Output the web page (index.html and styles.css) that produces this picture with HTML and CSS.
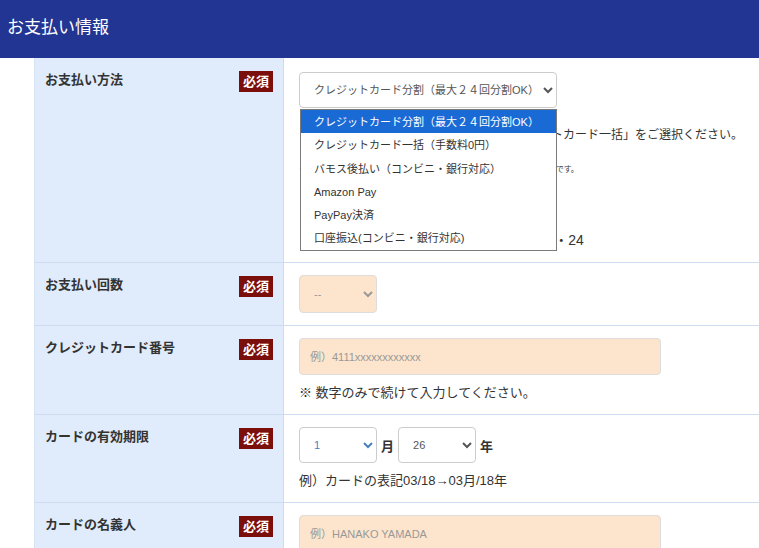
FILE: index.html
```html
<!DOCTYPE html>
<html lang="ja">
<head>
<meta charset="utf-8">
<title>お支払い情報</title>
<link rel="stylesheet" href="styles.css">
</head>
<body>
<header class="page-head"><h1 class="page-title">お支払い情報</h1></header>
<div class="form">
  <div class="row">
    <div class="label"><span class="label-text">お支払い方法</span><span class="req">必須</span></div>
    <div class="field">
      <div class="select-wrap">
        <select class="sel sel-method"><option>クレジットカード分割（最大２４回分割OK）</option></select>
        <ul class="popup">
          <li class="opt opt-active">クレジットカード分割（最大２４回分割OK）</li>
          <li class="opt">クレジットカード一括（手数料0円）</li>
          <li class="opt">バモス後払い（コンビニ・銀行対応）</li>
          <li class="opt">Amazon Pay</li>
          <li class="opt">PayPay決済</li>
          <li class="opt">口座振込(コンビニ・銀行対応)</li>
        </ul>
      </div>
      <p class="note note-main">※デビットカードをご利用の場合は「クレジットカード一括」をご選択ください。</p>
      <p class="note note-small">※バモス後払いは商品到着後にコンビニ・銀行でお支払いできる決済方法です。</p>
      <p class="note note-hidden">【分割回数】</p>
      <p class="note note-count">※回数：3・5・6・10・12・15・18・20・24</p>
    </div>
  </div>
  <div class="row">
    <div class="label"><span class="label-text">お支払い回数</span><span class="req">必須</span></div>
    <div class="field">
      <select class="sel sel-count sel-peach"><option>--</option></select>
    </div>
  </div>
  <div class="row">
    <div class="label"><span class="label-text">クレジットカード番号</span><span class="req">必須</span></div>
    <div class="field">
      <input class="inp" type="text" placeholder="例）4111xxxxxxxxxxxx">
      <p class="help">※ 数字のみで続けて入力してください。</p>
    </div>
  </div>
  <div class="row">
    <div class="label"><span class="label-text">カードの有効期限</span><span class="req">必須</span></div>
    <div class="field">
      <div class="expiry">
        <select class="sel sel-date sel-month"><option>1</option></select>
        <span class="unit">月</span>
        <select class="sel sel-date sel-year"><option>26</option></select>
        <span class="unit">年</span>
      </div>
      <p class="help">例）カードの表記03/18→03月/18年</p>
    </div>
  </div>
  <div class="row">
    <div class="label"><span class="label-text">カードの名義人</span><span class="req">必須</span></div>
    <div class="field">
      <input class="inp" type="text" placeholder="例）HANAKO YAMADA">
    </div>
  </div>
</div>
</body>
</html>
```

FILE: styles.css
```css
* { box-sizing: border-box; }
html, body { margin: 0; padding: 0; background: #fff; }
body {
  font-family: "Liberation Sans", "Noto Sans CJK JP", sans-serif;
  color: #333;
  overflow: hidden;
}
.page-head {
  background: #223592;
  height: 58px;
  display: flex;
  align-items: center;
  padding-left: 7px;
  padding-bottom: 2px;
}
.page-title {
  margin: 0;
  color: #fff;
  font-size: 17px;
  font-weight: normal;
  line-height: 24px;
}
.form {
  margin-left: 34px;
}
.row {
  display: grid;
  grid-template-columns: 250px 1fr;
  border-bottom: 1px solid #cfdcf0;
}
.label {
  background: #e0ecfb;
  border-left: 1px solid #d6e3f4;
  border-right: 1px solid #cddcf0;
  display: flex;
  justify-content: space-between;
  align-items: flex-start;
  padding: 12px 10px 0 10px;
}
.label-text {
  font-size: 13px;
  font-weight: bold;
  line-height: 18px;
  margin-top: 1px;
  color: #333;
}
.req {
  background: #7b0f0b;
  color: #fff;
  font-size: 13px;
  font-weight: bold;
  line-height: 21px;
  height: 21px;
  padding: 0 4px;
  margin-top: 1px;
}
.field {
  padding: 12px 16px 12px 15px;
}
.select-wrap {
  position: relative;
  width: 258px;
  margin-top: 2px;
}
.sel {
  font-family: "Liberation Sans", "Noto Sans CJK JP", sans-serif;
  font-size: 11px;
  color: #555;
  height: 36px;
  border: 1px solid #ccc;
  border-radius: 4px;
  background-color: #fff;
  padding: 0 8px 0 10px;
  margin: 0;
  display: block;
}
.sel-method { width: 258px; }
.sel-peach { background-color: #fce5cc; border-color: #ddd; color: #999; }
.sel-count { width: 78px; height: 38px; }
.sel-date { width: 78px; }
.sel-month { color: #4a7fbf; }
.popup {
  position: absolute;
  left: 1px;
  top: 37px;
  width: 257px;
  margin: 0;
  padding: 0;
  list-style: none;
  background: #fff;
  border: 1px solid #7a7a7a;
  z-index: 2;
}
.opt {
  height: 23.3px;
  line-height: 24px;
  font-size: 11px;
  padding-left: 13px;
  color: #333;
  white-space: nowrap;
}
.opt-active { background: #1a6ad6; color: #fff; }
.note { margin: 0; white-space: nowrap; }
.note-main { font-size: 12px; line-height: 20px; margin-top: 17px; }
.note-small { font-size: 7.8px; line-height: 12px; margin-top: 19px; }
.note-hidden { font-size: 13px; line-height: 20px; margin-top: 14px; }
.note-count { font-size: 14px; line-height: 20px; margin-top: 20px; }
.inp {
  display: block;
  width: 362px;
  height: 37px;
  border: 1px solid #ddd;
  border-radius: 4px;
  background: #fce5cc;
  font-family: "Liberation Sans", "Noto Sans CJK JP", sans-serif;
  font-size: 11px;
  padding: 0 10px;
  margin: 0;
  color: #555;
}
.inp::placeholder { color: #999; }
.help {
  margin: 9px 0 0 0;
  font-size: 13px;
  line-height: 18px;
}
.expiry {
  display: flex;
  align-items: center;
  gap: 4px;
}
.unit {
  font-size: 13px;
  font-weight: bold;
}
```
